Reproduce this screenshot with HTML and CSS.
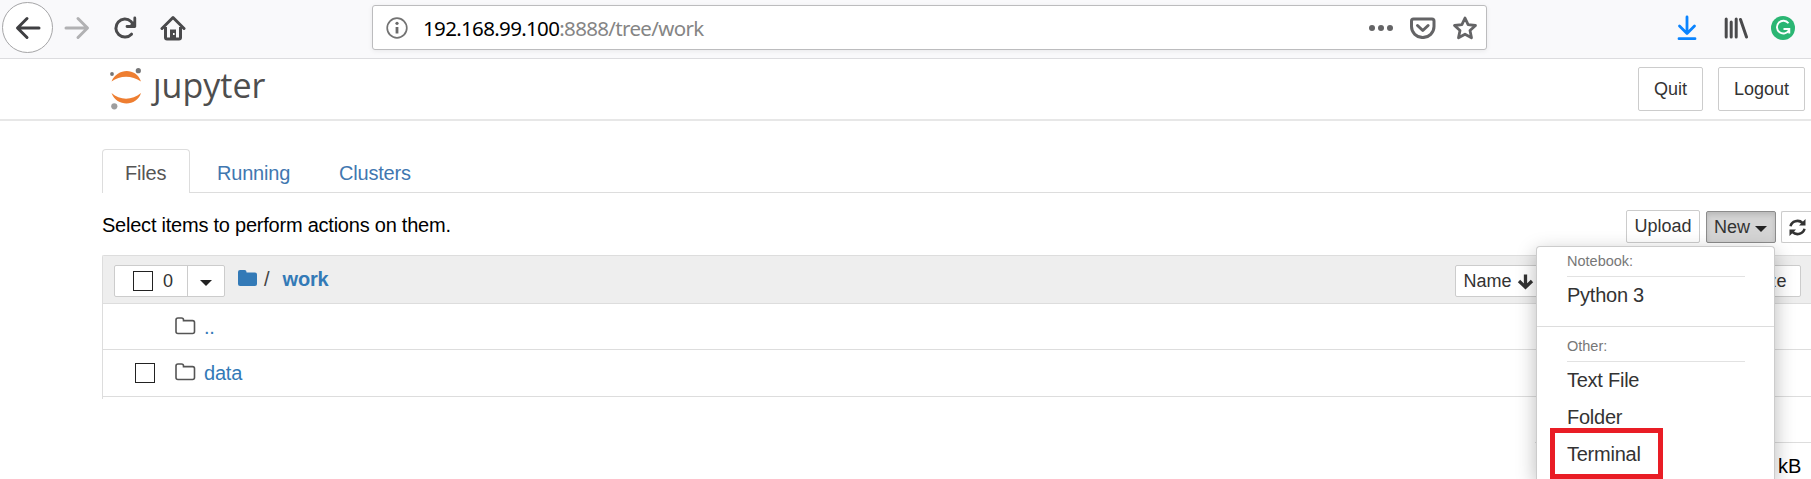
FILE: index.html
```html
<!DOCTYPE html>
<html lang="en">
<head>
<meta charset="utf-8">
<title>work/</title>
<link rel="stylesheet" href="styles.css">
</head>
<body>
<div class="toolbar">
  <div class="nav">
    <span class="back"><svg width="26" height="24" viewBox="0 0 26 24"><path d="M24 12H3M12 2.500L2.500 12l9.500 9.500" fill="none" stroke="#3f3f42" stroke-width="3" stroke-linecap="round" stroke-linejoin="round"/></svg></span>
    <svg class="forward" width="26" height="24" viewBox="0 0 26 24"><path d="M2 12h21M14 2.500L23.500 12 14 21.500" fill="none" stroke="#b1b1b3" stroke-width="3" stroke-linecap="round" stroke-linejoin="round"/></svg>
    <svg class="reload" width="24" height="24" viewBox="0 0 24 24"><path d="M18.500 18.200A9 9 0 1 1 18 5.500L20.500 9" fill="none" stroke="#4a4a4c" stroke-width="3" stroke-linecap="round"/><path d="M21.800 2v8.500H14" fill="none" stroke="#4a4a4c" stroke-width="2.800" stroke-linecap="round" stroke-linejoin="round"/><path d="M16 10l5-5v5z" fill="#4a4a4c"/></svg>
    <svg class="home" width="26" height="26" viewBox="0 0 26 26"><path d="M2 13.500L13 2.500l11 11" fill="none" stroke="#4a4a4c" stroke-width="3" stroke-linecap="round" stroke-linejoin="round"/><path d="M5.500 12v10.500q0 1.500 1.500 1.500h12q1.500 0 1.500-1.500V12" fill="none" stroke="#4a4a4c" stroke-width="3"/><path d="M10 24v-9.500h6V24z" fill="#4a4a4c"/><path d="M13 18h1.600v2H13z" fill="#fff"/></svg>
  </div>
  <div class="urlbar">
    <svg width="22" height="22" viewBox="0 0 22 22"><circle cx="11" cy="11" r="9.800" fill="none" stroke="#737373" stroke-width="1.700"/><circle cx="11" cy="6.300" r="1.600" fill="#6a6a6a"/><path d="M11 10v6.500" stroke="#6a6a6a" stroke-width="2.800"/></svg>
    <span class="url">192.168.99.100<span class="path">:8888/tree/work</span></span>
    <svg class="dots" width="26" height="8" viewBox="0 0 26 8"><g fill="#646466"><circle cx="4" cy="4" r="3"/><circle cx="13" cy="4" r="3"/><circle cx="22" cy="4" r="3"/></g></svg>
    <svg class="pocket" width="26" height="22" viewBox="0 0 26 22"><path d="M3.500 2h18.500q2 0 2 2v5.500a11 10.800 0 0 1-22.500 0V4q0-2 2-2z" fill="none" stroke="#646466" stroke-width="3"/><path d="M7.500 8.500l5.300 5 5.300-5" fill="none" stroke="#646466" stroke-width="3" stroke-linecap="round" stroke-linejoin="round"/></svg>
    <svg class="star" width="26" height="26" viewBox="0 0 26 26"><path d="M13 3l3.100 6.600 7.400.900-5.500 5 1.500 7.300L13 19.200l-6.500 3.600L8 15.500l-5.500-5 7.400-.900z" fill="none" stroke="#646466" stroke-width="2.800" stroke-linejoin="round"/></svg>
  </div>
  <div class="tools">
    <svg width="20" height="26" viewBox="0 0 20 26"><path d="M10 2v15M2.500 11l7.500 7.500 7.500-7.500M2 23.700h16" fill="none" stroke="#0a84ff" stroke-width="2.800" stroke-linecap="round" stroke-linejoin="round"/></svg>
    <svg width="24" height="22" viewBox="0 0 24 22"><path d="M2.200 2v18M7.200 5v15M12.200 2v18M16.500 2.500l6 17.500" fill="none" stroke="#4a4a4c" stroke-width="3" stroke-linecap="round"/></svg>
    <svg class="grammar" width="24" height="24" viewBox="0 0 24 24"><circle cx="12" cy="12" r="12" fill="#2bb673"/><path d="M17.500 7.300A6.400 6.400 0 1 0 18 14.200M12.500 13h5.800v4.500" fill="none" stroke="#fff" stroke-width="1.900"/></svg>
  </div>
</div>

<div class="header">
  <div class="logo">
    <svg width="34" height="44" viewBox="0 0 34 44"><path d="M1.500 15.500C7 2 26 1 31 15.500C22 9 10 9 1.500 15.500z" fill="#ee7e31"/><path d="M1.500 27C10 34.500 22 34.500 31 27C27 40.500 7 41.500 1.500 27z" fill="#ee7e31"/><circle cx="28.300" cy="4.700" r="2.600" fill="#767677"/><circle cx="2" cy="8" r="1.900" fill="#767677"/><circle cx="4.300" cy="40.300" r="3.100" fill="#9e9e9e"/></svg>
    <span class="word">jupyter</span>
  </div>
  <span class="hbtn quit">Quit</span><span class="hbtn logout">Logout</span>
</div>

<div class="tabs"><span class="tab active">Files</span><span class="tab running">Running</span><span class="tab clusters">Clusters</span><span class="rule"></span></div>

<div class="actions">
  <span class="hint">Select items to perform actions on them.</span>
  <span class="btn upload">Upload</span>
  <span class="btn new">New<i class="caret"></i></span>
  <span class="btn refresh"><svg width="17" height="17" viewBox="0 0 17 17"><path d="M1.500 7.200A7 6.500 0 0 1 13.500 4M15.500 9.800A7 6.500 0 0 1 3.500 13" fill="none" stroke="#333" stroke-width="2.500"/><path d="M16.500 0v6.600H10zM.500 17v-6.600H7z" fill="#333"/></svg></span>
</div>

<div class="list">
  <div class="row head">
    <span class="select"><span class="all"><i class="check"></i>0</span><span class="drop"><i class="caret"></i></span></span>
    <svg class="folder" width="20" height="17" viewBox="0 0 20 17"><path d="M2 0h4.500q2 0 2 2v.500H17q2 0 2 2V14q0 2-2 2H2q-2 0-2-2V2q0-2 2-2z" fill="#337ab7"/></svg>
    <span class="slash">/</span><b class="crumb">work</b>
    <span class="sort name">Name<svg width="17" height="17" viewBox="0 0 17 17"><path d="M8.500 1.500v13M2 8l6.500 6.300L15 8" fill="none" stroke="#333" stroke-width="3.300"/></svg></span>
    <span class="sort size">File size</span>
  </div>
  <div class="row item up"><i class="nocheck"></i><svg width="21" height="18" viewBox="0 0 21 18"><path d="M3 1h3.500q2 0 2 2v.600H17.500q2 0 2 2V14.500q0 2-2 2H3q-2 0-2-2V3q0-2 2-2z" fill="none" stroke="#555" stroke-width="1.600"/></svg><a>..</a></div>
  <div class="row item data"><i class="check"></i><svg width="21" height="18" viewBox="0 0 21 18"><path d="M3 1h3.500q2 0 2 2v.600H17.500q2 0 2 2V14.500q0 2-2 2H3q-2 0-2-2V3q0-2 2-2z" fill="none" stroke="#555" stroke-width="1.600"/></svg><a>data</a></div>
</div>
<div class="rest"><div class="restline"></div><div class="kb">kB</div></div>

<div class="menu">
  <div class="group">Notebook:</div>
  <div class="entry python">Python 3</div>
  <div class="divider"></div>
  <div class="group other">Other:</div>
  <div class="entry">Text File</div>
  <div class="entry">Folder</div>
  <div class="entry">Terminal</div>
</div>
<div class="highlight"></div>
</body>
</html>
```
FILE: styles.css
```css
* { box-sizing: border-box; }
body { margin: 0; width: 1811px; height: 479px; overflow: hidden; position: relative; background: #fff; color: #000; font: 20px/24px "Liberation Sans", Arial, sans-serif; }
svg { display: block; flex: none; }
i { font-style: normal; }

.toolbar { height: 59px; background: #f9f9fb; border-bottom: 1px solid #dcdcdf; display: flex; padding-left: 2px; }
.nav { width: 370px; display: flex; align-items: flex-start; }
.back { width: 51px; height: 51px; margin-top: 2px; border: 1px solid #a5a5a7; border-radius: 50%; background: #fff; display: flex; align-items: center; justify-content: center; }
.forward { margin: 16px 0 0 11px; }
.reload { margin: 16px 0 0 23px; }
.home { margin: 15px 0 0 23px; }
.urlbar { width: 1115px; height: 45px; margin-top: 5px; border: 1px solid #bcbcbe; border-radius: 3px; background: #fff; box-shadow: 0 1px 5px rgba(0,0,0,.07); display: flex; align-items: center; padding: 0 8px 0 13px; }
.url { margin-left: 15px; font: 20.500px/28px "Noto Sans", "Open Sans", sans-serif; letter-spacing: -0.660px; flex: 1; white-space: nowrap; }
.path { color: #858585; }
.pocket { margin-left: 16px; }
.star { margin-left: 16px; }
.tools { display: flex; align-items: center; gap: 27px; margin-left: 190px; height: 56px; }
.grammar { margin-left: -4px; }

.header { height: 62px; border-bottom: 2px solid #e7e7e7; display: flex; align-items: flex-start; padding: 8px 6px 0 110px; }
.logo { display: flex; flex: 1; margin-top: -1px; }
.word { margin: -4px 0 0 9px; font: 34px/46px "Open Sans", "Noto Sans", sans-serif; color: #4e4e4e; clip-path: polygon(-10px 15px, 14px 15px, 14px 0, 130px 0, 130px 50px, -10px 50px); }
.hbtn { height: 44px; border: 1px solid #ccc; border-radius: 2px; color: #333; font-size: 18px; line-height: 42px; text-align: center; }
.quit { width: 65px; margin-right: 15px; }
.logout { width: 87px; }

.tabs { display: flex; height: 44px; margin: 28px 0 0 102px; line-height: 48px; letter-spacing: -0.200px; color: #4177b0; }
.tab { border-bottom: 1px solid #ddd; }
.active { width: 88px; border: 1px solid #ddd; border-bottom: 0; border-radius: 4px 4px 0 0; padding-left: 22px; color: #555; line-height: 46px; }
.running { width: 149px; padding-left: 27px; }
.clusters { width: 100px; }
.rule { flex: 1; border-bottom: 1px solid #ddd; }

.actions { display: flex; height: 62px; padding: 17px 0 0 102px; }
.hint { flex: none; width: 1524px; line-height: 31px; letter-spacing: -0.230px; }
.btn { flex: none; height: 32px; margin-top: 1px; border: 1px solid #ccc; border-radius: 2px; color: #333; font-size: 18px; line-height: 31px; }
.upload { width: 74px; height: 33px; margin: 0 6px 0 0; text-align: center; }
.new { width: 70px; margin-right: 5px; padding-left: 7px; background: #d4d4d4; border-color: #8c8c8c; box-shadow: inset 0 3px 5px rgba(0,0,0,.125); display: flex; align-items: center; }
.caret { display: inline-block; border: 6px solid transparent; border-top-color: #222; border-bottom: 0; }
.new .caret { margin: 3px 0 0 5px; }
.refresh { width: 30px; padding: 7px 0 0 7px; border-right: 0; border-radius: 2px 0 0 2px; }

.list { margin-left: 102px; height: 144px; border: 1px solid #ddd; border-width: 1px 0 0 1px; border-radius: 2px 0 0 0; }
.row { display: flex; align-items: center; border-bottom: 1px solid #ddd; }
.head { height: 48px; background: #eee; padding-left: 11px; }
.select { display: flex; width: 111px; height: 32px; margin-top: 3px; background: #fff; border: 1px solid #ccc; border-radius: 2px; font-size: 18px; line-height: 30px; color: #333; }
.all { width: 73px; padding-left: 18px; display: flex; align-items: center; gap: 10px; border-right: 1px solid #ccc; }
.check { display: block; flex: none; width: 20px; height: 20px; border: 1px solid #222; background: #fff; }
.drop { padding: 14px 0 0 12px; line-height: 0; }
.folder { margin: -3px 0 0 13px; }
.slash { margin: -2px 0 0 6px; color: #444; }
.crumb { margin: -2px 0 0 13px; color: #337ab7; width: 1172px; letter-spacing: -0.200px; }
.sort { height: 32px; margin-top: 3px; background: #fff; border: 1px solid #ccc; border-radius: 2px; font-size: 18px; line-height: 30px; color: #333; flex: none; white-space: nowrap; }
.name { width: 90px; padding-left: 8px; display: flex; align-items: center; gap: 5px; }
.size { width: 96px; margin-left: 160px; padding-right: 13px; text-align: right; }
.item { padding-left: 32px; }
.item a { margin-left: 8px; color: #337ab7; letter-spacing: -0.200px; }
.item svg { margin-left: 20px; }
.up { height: 46px; }
.up svg { margin-top: -2px; }
.data { height: 47px; }
.data svg { margin-top: -3px; }
.nocheck { width: 20px; }

.rest { margin-left: 1535px; height: 80px; overflow: hidden; }
.restline { height: 44px; border-bottom: 1px solid #ddd; }
.kb { padding: 11px 0 0 243px; }

.menu { position: absolute; left: 1536px; top: 246px; width: 239px; height: 233px; background: #fff; border: 1px solid #ccc; border-bottom: 0; border-radius: 4px 4px 0 0; box-shadow: 0 6px 20px rgba(0,0,0,.28); color: #333; overflow: hidden; }
.group { margin: 0 29px 0 30px; height: 30px; border-bottom: 1px solid #e2e2e2; font-size: 14.500px; line-height: 28px; color: #777; }
.entry { height: 37px; padding-left: 30px; line-height: 37px; letter-spacing: -0.250px; }
.python { height: 49px; }
.divider { height: 1px; background: #ddd; }
.other { height: 35px; line-height: 38px; }
.highlight { position: absolute; left: 1550px; top: 428px; width: 113px; height: 51px; border: 5px solid #e91d25; }
```
